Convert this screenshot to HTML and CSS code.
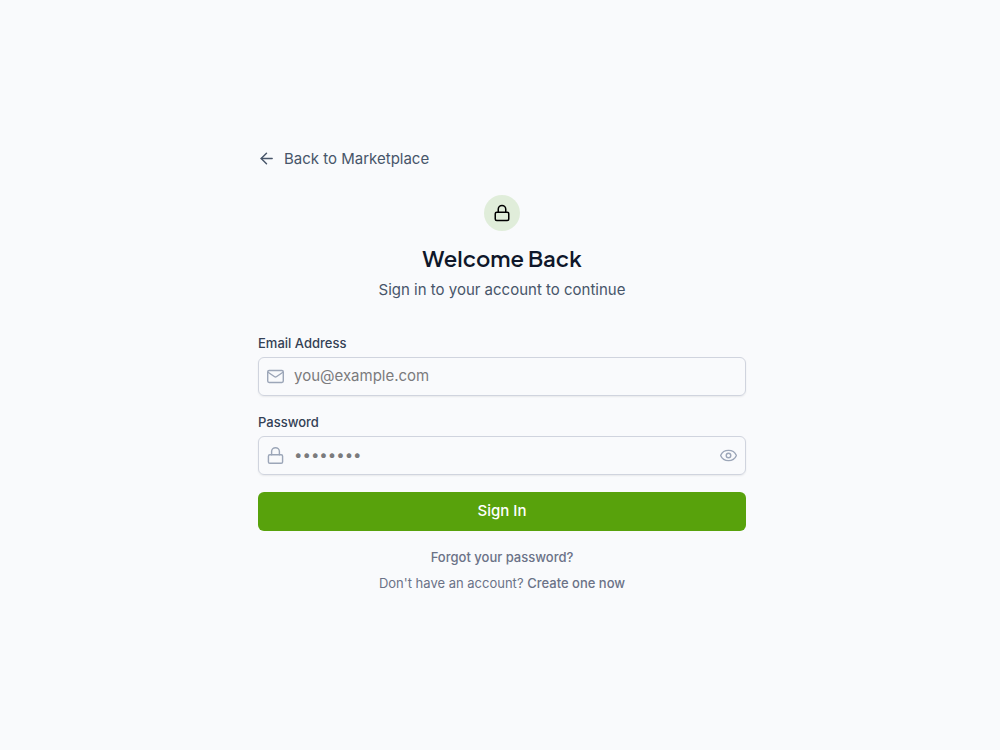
FILE: index.html
```html
<!DOCTYPE html>
<html lang="en">
<head>
<meta charset="utf-8">
<meta name="viewport" content="width=device-width, initial-scale=1">
<title>Sign In</title>
<link rel="stylesheet" href="styles.css">
</head>
<body>
<main class="auth">
  <a class="back" href="#"><svg class="icon" viewBox="0 0 24 24"><path d="m12 19.5-7.5-7.5 7.5-7.5"/><path d="M20 12H4.500"/></svg>Back to Marketplace</a>
  <header class="intro">
    <span class="badge"><svg class="icon icon-large" viewBox="0 0 24 24"><rect width="18" height="11" x="3" y="11" rx="2"/><path d="M7 11V7a5 5 0 0 1 10 0v4"/></svg></span>
    <h1 class="title">Welcome Back</h1>
    <p class="subtitle">Sign in to your account to continue</p>
  </header>
  <form class="form">
    <div class="field">
      <label class="label" for="email">Email Address</label>
      <div class="control">
        <svg class="icon" viewBox="0 0 24 24"><rect width="22" height="17" x="1" y="3.5" rx="2"/><path d="m1.5 6 9.3 6.4a2.1 2.1 0 0 0 2.4 0L22.5 6"/></svg>
        <input class="input" id="email" type="email" placeholder="you@example.com">
      </div>
    </div>
    <div class="field">
      <label class="label" for="password">Password</label>
      <div class="control">
        <svg class="icon" viewBox="0 0 24 24"><rect width="20" height="12" x="2" y="11" rx="2"/><path d="M6.5 11V6.5a5.5 5.5 0 0 1 11 0V11"/></svg>
        <input class="input" id="password" type="password" placeholder="••••••••">
        <button class="reveal" type="button" aria-label="Show password"><svg class="icon" viewBox="0 0 24 24"><path d="M1.06 12.35a1 1 0 0 1 0-.7 11.75 10.75 0 0 1 21.88 0 1 1 0 0 1 0 .7 11.75 10.75 0 0 1-21.88 0"/><circle cx="12" cy="12" r="3.2"/></svg></button>
      </div>
    </div>
    <button class="submit" type="submit">Sign In</button>
  </form>
  <footer class="links">
    <a class="link" href="#">Forgot your password?</a>
    <p class="signup">Don't have an account? <a class="link" href="#">Create one now</a></p>
  </footer>
</main>
</body>
</html>
```
FILE: styles.css
```css
* { box-sizing: border-box; }
body {
  margin: 0;
  min-height: 100vh;
  display: flex;
  align-items: center;
  justify-content: center;
  padding: 16px 12px 28px 16px;
  background: #f9fafc;
  color: #475569;
  font: 15px/24px Inter, sans-serif;
}
.auth { width: 100%; max-width: 488px; }
.icon {
  width: 17px;
  height: 17px;
  flex: none;
  display: block;
  fill: none;
  stroke: currentColor;
  stroke-width: 2;
  stroke-linecap: round;
  stroke-linejoin: round;
}
.icon-large { width: 18px; height: 18px; }
.back {
  display: flex;
  width: fit-content;
  align-items: center;
  gap: 9px;
  color: inherit;
  text-decoration: none;
}
.intro {
  display: flex;
  flex-direction: column;
  align-items: center;
  padding: 24px 0 32px;
  text-align: center;
}
.badge {
  display: grid;
  place-items: center;
  width: 36px;
  height: 36px;
  border-radius: 50%;
  background: #e0edda;
  color: #000;
}
.title {
  margin: 11px 0 4px;
  color: #0f172a;
  font: 600 22px/32px "Plus Jakarta Sans", Inter, sans-serif;
}
.subtitle { margin: 0; }
.form { display: grid; gap: 17px; }
.field { display: grid; gap: 5px; }
.label { color: #334155; font-size: 13px; line-height: 18px; font-weight: 500; }
.control {
  display: flex;
  align-items: center;
  gap: 10px;
  height: 39px;
  padding: 0 8px;
  border: 1px solid #d0d4de;
  border-radius: 6px;
  box-shadow: 0 1px 2px rgba(0, 0, 0, .07);
  color: #9ca6b8;
}
.input {
  flex: 1;
  min-width: 0;
  padding: 0;
  border: 0;
  outline: 0;
  background: transparent;
  color: #0f172a;
  font: inherit;
}
.input::placeholder { color: #7b7b7d; }
.reveal { padding: 0; border: 0; background: none; color: inherit; }
.submit {
  height: 39px;
  border: 0;
  border-radius: 6px;
  background: #58a20c;
  color: #fff;
  font: 500 15px/24px Inter, sans-serif;
}
.links {
  display: grid;
  justify-items: center;
  gap: 8px;
  padding-top: 17px;
  color: #6b7287;
  font-size: 13px;
  line-height: 18px;
}
.signup { margin: 0; }
.link { color: inherit; font-weight: 500; text-decoration: none; }
```
